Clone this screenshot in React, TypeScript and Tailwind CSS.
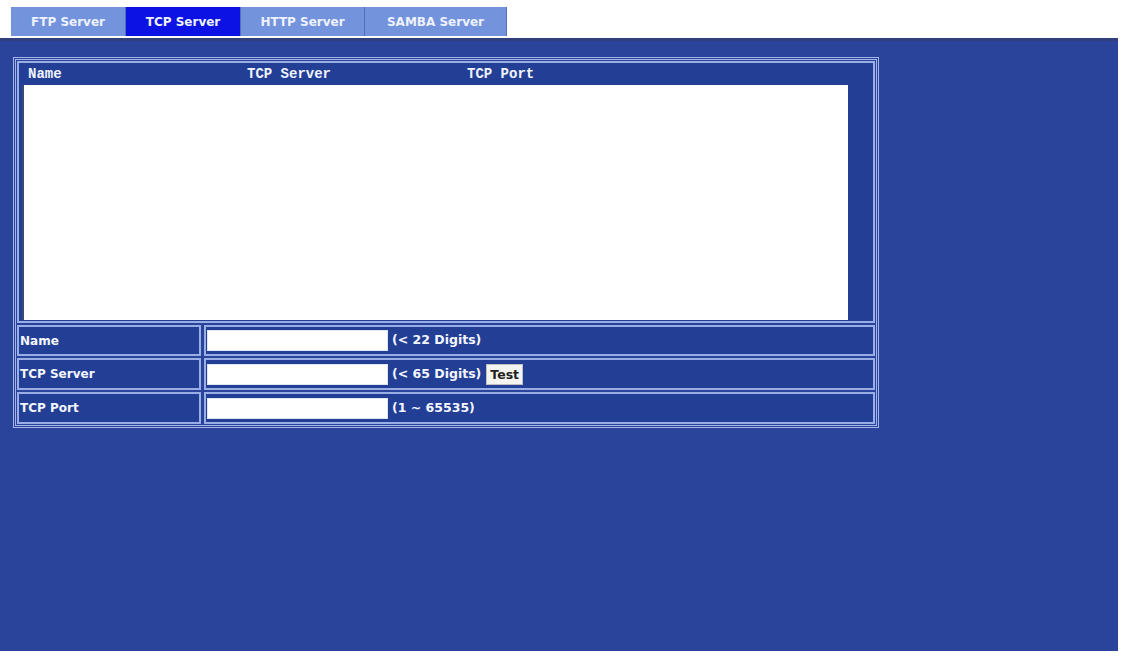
import React from "react";

const tabs = ["FTP Server", "TCP Server", "HTTP Server", "SAMBA Server"];
const tabW = ["w-[115px]", "w-[115px]", "w-[124px]", "w-[142px]"];
const sans = '"DejaVu Sans", "Liberation Sans", Arial, sans-serif';

function Row({ label, hint, test, h }: { label: string; hint: string; test?: boolean; h: string }) {
  return (
    <div className={`flex gap-[3px] ${h}`}>
      <div className="w-[184px] border-2 border-[#9aaee6] bg-[#233f95] flex items-center pl-[1px] text-[#f4f6ff] font-bold text-[12px]">
        {label}
      </div>
      <div className="flex-1 border-2 border-[#9aaee6] bg-[#233f95] flex items-center pl-[1px]">
        <div className="w-[181px] h-[21px] bg-white border border-[#dfe6f5]" />
        <span className="ml-[4px] text-[#f4f6ff] font-bold text-[12.5px]">{hint}</span>
        {test && (
          <span className="ml-[5px] bg-[#f4f4f0] text-[#222] font-bold text-[12.5px] leading-[19px] px-[3px] border border-[#c0c0c0]">
            Test
          </span>
        )}
      </div>
    </div>
  );
}

export default function App() {
  return (
    <div className="w-[1123px] h-[656px] bg-white overflow-hidden" style={{ fontFamily: sans }}>
      <div className="flex pl-[11px] pt-[7px] h-[38px]">
        {tabs.map((t, i) => (
          <div
            key={t}
            className={`${tabW[i]} h-[29px] flex items-center justify-center text-[#eef2ff] font-bold text-[12px] border-r border-[#4f6fba] ${
              i === 1 ? "bg-[#0b12e3]" : "bg-[#7393dc]"
            }`}
          >
            {t}
          </div>
        ))}
      </div>
      <div className="w-[1118px] h-[613px] bg-[#29449a] border-t-[3px] border-[#31407a] pt-[16px] pl-[13px]">
        <div className="w-[866px] border-[3px] border-double border-[#a4b4e8] p-[1px] flex flex-col gap-[2px]">
          <div className="h-[262px] border-2 border-[#9aaee6] bg-[#233f95] flex flex-col">
            <div
              className="h-[22px] flex items-center text-[#f0f3ff] font-bold text-[14px]"
              style={{ fontFamily: '"Liberation Mono", "Courier New", monospace' }}
            >
              <span className="w-[228px] pl-[9px]">Name</span>
              <span className="w-[220px]">TCP Server</span>
              <span>TCP Port</span>
            </div>
            <div className="flex flex-1 pl-[3px] pb-[1px]">
              <div className="w-[826px] bg-white border-l-2 border-[#3a4a70]" />
            </div>
          </div>
          <Row label="Name" hint="(< 22 Digits)" h="h-[31px]" />
          <Row label="TCP Server" hint="(< 65 Digits)" test h="h-[32px]" />
          <Row label="TCP Port" hint="(1 ~ 65535)" h="h-[32px]" />
        </div>
      </div>
    </div>
  );
}
